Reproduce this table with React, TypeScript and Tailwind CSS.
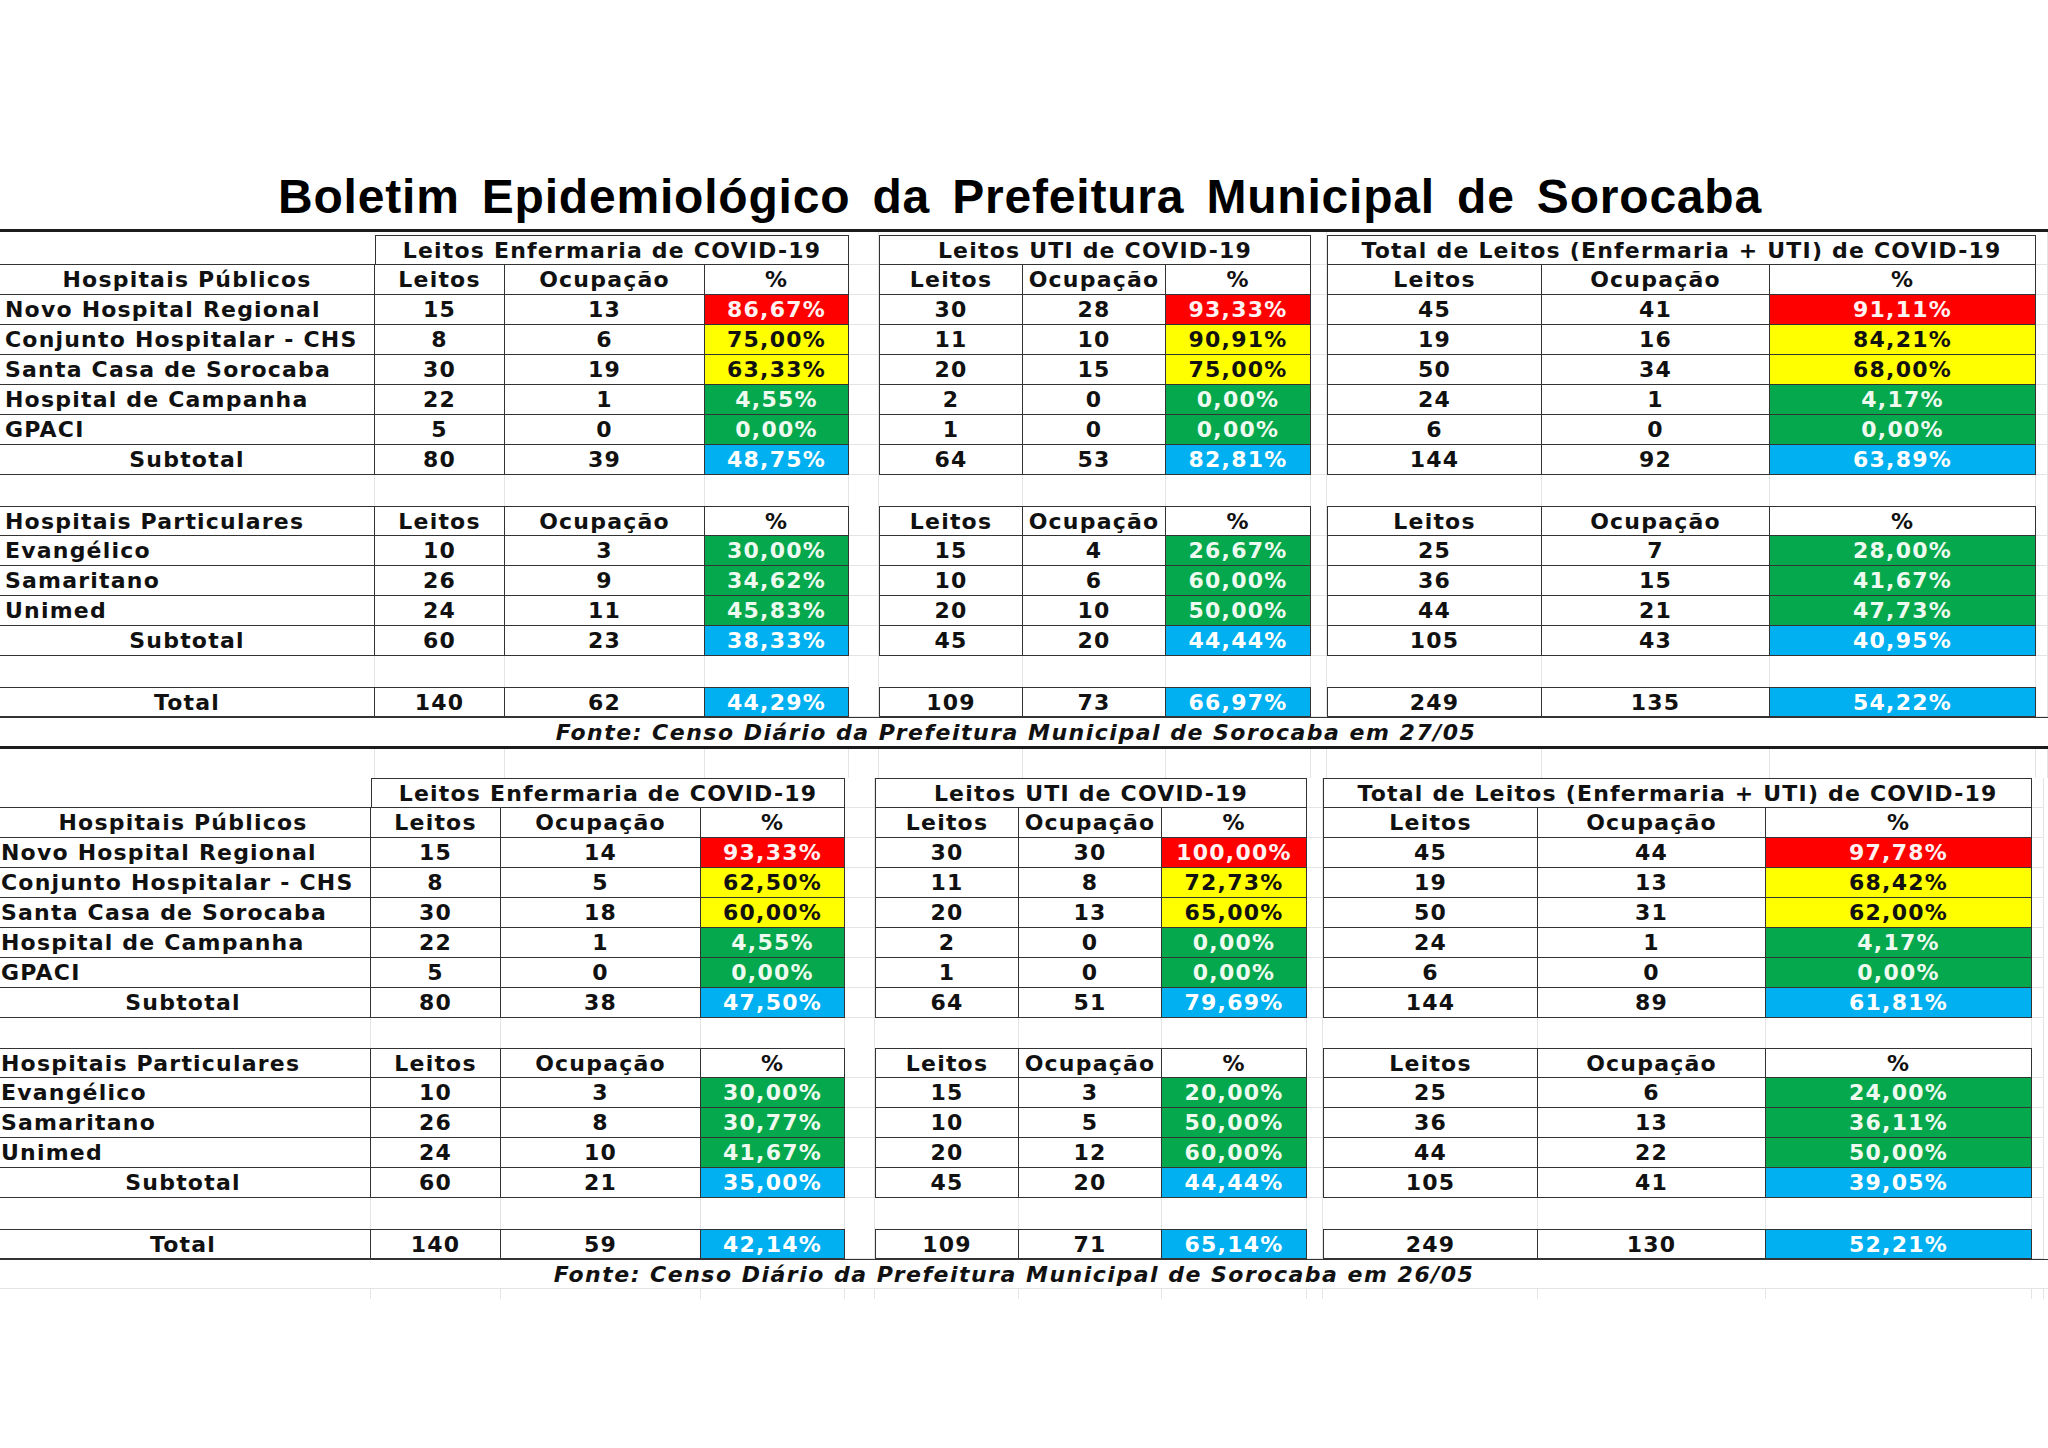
import { Fragment } from "react";
import clsx from "clsx";

type Tone = "r" | "y" | "g" | "b";
type Trip = [string, string, string, Tone];
type Line = { name: string; data: [Trip, Trip, Trip] };
type Block = {
  date: string;
  publicos: Line[];
  pubSub: Line;
  particulares: Line[];
  partSub: Line;
  total: Line;
};

const GRID =
  "grid grid-cols-[375px_130px_200px_144px_30px_144px_143px_145px_16px_215px_228px_266px_12px]";

const TONES: Record<Tone, string> = {
  r: "bg-[#ff0000] text-[#fff2f2]",
  y: "bg-[#ffff00] text-[#111]",
  g: "bg-[#05a84c] text-[#eefaf0]",
  b: "bg-[#00b0f0] text-white",
};

const BLOCKS: Block[] = [
  {
    date: "27/05",
    publicos: [
      { name: "Novo Hospital Regional", data: [["15", "13", "86,67%", "r"], ["30", "28", "93,33%", "r"], ["45", "41", "91,11%", "r"]] },
      { name: "Conjunto Hospitalar - CHS", data: [["8", "6", "75,00%", "y"], ["11", "10", "90,91%", "y"], ["19", "16", "84,21%", "y"]] },
      { name: "Santa Casa de Sorocaba", data: [["30", "19", "63,33%", "y"], ["20", "15", "75,00%", "y"], ["50", "34", "68,00%", "y"]] },
      { name: "Hospital de Campanha", data: [["22", "1", "4,55%", "g"], ["2", "0", "0,00%", "g"], ["24", "1", "4,17%", "g"]] },
      { name: "GPACI", data: [["5", "0", "0,00%", "g"], ["1", "0", "0,00%", "g"], ["6", "0", "0,00%", "g"]] },
    ],
    pubSub: { name: "Subtotal", data: [["80", "39", "48,75%", "b"], ["64", "53", "82,81%", "b"], ["144", "92", "63,89%", "b"]] },
    particulares: [
      { name: "Evangélico", data: [["10", "3", "30,00%", "g"], ["15", "4", "26,67%", "g"], ["25", "7", "28,00%", "g"]] },
      { name: "Samaritano", data: [["26", "9", "34,62%", "g"], ["10", "6", "60,00%", "g"], ["36", "15", "41,67%", "g"]] },
      { name: "Unimed", data: [["24", "11", "45,83%", "g"], ["20", "10", "50,00%", "g"], ["44", "21", "47,73%", "g"]] },
    ],
    partSub: { name: "Subtotal", data: [["60", "23", "38,33%", "b"], ["45", "20", "44,44%", "b"], ["105", "43", "40,95%", "b"]] },
    total: { name: "Total", data: [["140", "62", "44,29%", "b"], ["109", "73", "66,97%", "b"], ["249", "135", "54,22%", "b"]] },
  },
  {
    date: "26/05",
    publicos: [
      { name: "Novo Hospital Regional", data: [["15", "14", "93,33%", "r"], ["30", "30", "100,00%", "r"], ["45", "44", "97,78%", "r"]] },
      { name: "Conjunto Hospitalar - CHS", data: [["8", "5", "62,50%", "y"], ["11", "8", "72,73%", "y"], ["19", "13", "68,42%", "y"]] },
      { name: "Santa Casa de Sorocaba", data: [["30", "18", "60,00%", "y"], ["20", "13", "65,00%", "y"], ["50", "31", "62,00%", "y"]] },
      { name: "Hospital de Campanha", data: [["22", "1", "4,55%", "g"], ["2", "0", "0,00%", "g"], ["24", "1", "4,17%", "g"]] },
      { name: "GPACI", data: [["5", "0", "0,00%", "g"], ["1", "0", "0,00%", "g"], ["6", "0", "0,00%", "g"]] },
    ],
    pubSub: { name: "Subtotal", data: [["80", "38", "47,50%", "b"], ["64", "51", "79,69%", "b"], ["144", "89", "61,81%", "b"]] },
    particulares: [
      { name: "Evangélico", data: [["10", "3", "30,00%", "g"], ["15", "3", "20,00%", "g"], ["25", "6", "24,00%", "g"]] },
      { name: "Samaritano", data: [["26", "8", "30,77%", "g"], ["10", "5", "50,00%", "g"], ["36", "13", "36,11%", "g"]] },
      { name: "Unimed", data: [["24", "10", "41,67%", "g"], ["20", "12", "60,00%", "g"], ["44", "22", "50,00%", "g"]] },
    ],
    partSub: { name: "Subtotal", data: [["60", "21", "35,00%", "b"], ["45", "20", "44,44%", "b"], ["105", "41", "39,05%", "b"]] },
    total: { name: "Total", data: [["140", "59", "42,14%", "b"], ["109", "71", "65,14%", "b"], ["249", "130", "52,21%", "b"]] },
  },
];

const HEAD: [Trip, Trip, Trip] = [
  ["Leitos", "Ocupação", "%", "y"],
  ["Leitos", "Ocupação", "%", "y"],
  ["Leitos", "Ocupação", "%", "y"],
];

const cellBase = "h-[30px] flex items-center border-r border-b border-[#333] whitespace-nowrap";

function Gap({ h = "h-[30px]" }: { h?: string }) {
  return <div className={clsx(h, "border-b border-r border-[#e4e4e4]")} />;
}

function Row({ line, center, top, header }: { line: Line; center?: boolean; top?: boolean; header?: boolean }) {
  return (
    <div className={GRID}>
      <div className={clsx(cellBase, top && "border-t", center ? "justify-center" : "justify-start pl-[5px]")}>
        {line.name}
      </div>
      {line.data.map((t, i) => (
        <Fragment key={i}>
          {i > 0 && <Gap />}
          <div className={clsx(cellBase, "justify-center", top && "border-t", i > 0 && "border-l")}>{t[0]}</div>
          <div className={clsx(cellBase, "justify-center", top && "border-t")}>{t[1]}</div>
          <div className={clsx(cellBase, "justify-center", top && "border-t", !header && TONES[t[3]])}>{t[2]}</div>
        </Fragment>
      ))}
      <Gap />
    </div>
  );
}

function GroupRow({ first }: { first: boolean }) {
  const titles = [
    "Leitos Enfermaria de COVID-19",
    "Leitos UTI de COVID-19",
    "Total de Leitos (Enfermaria + UTI) de COVID-19",
  ];
  const h = first ? "h-[33px]" : "h-[30px]";
  return (
    <div className={GRID}>
      <div className={clsx(h, "border-b border-[#333]")} />
      {titles.map((t, i) => (
        <Fragment key={t}>
          {i > 0 && <Gap h={h} />}
          <div
            className={clsx(
              "col-span-3 h-[30px] flex items-center justify-center border border-[#333] whitespace-nowrap",
              first && "mt-[3px]"
            )}
          >
            {t}
          </div>
        </Fragment>
      ))}
      <Gap h={h} />
    </div>
  );
}

function BlankRow({ h = "h-[30px]" }: { h?: string }) {
  return (
    <div className={GRID}>
      {Array.from({ length: 13 }).map((_, i) => (
        <div key={i} className={clsx(h, "border-r border-[#e4e4e4]")} />
      ))}
    </div>
  );
}

function Bulletin({ block, first }: { block: Block; first: boolean }) {
  return (
    <div className={clsx(!first && "-ml-[4px]")}>
      {first && <div className="h-[3px] bg-[#1c1c1c]" />}
      <GroupRow first={first} />
      <Row line={{ name: "Hospitais Públicos", data: HEAD }} center header />
      {block.publicos.map((l) => (
        <Row key={l.name} line={l} />
      ))}
      <Row line={block.pubSub} center />
      <BlankRow h={first ? "h-[31px]" : "h-[30px]"} />
      <Row line={{ name: "Hospitais Particulares", data: HEAD }} top header />
      {block.particulares.map((l) => (
        <Row key={l.name} line={l} />
      ))}
      <Row line={block.partSub} center />
      <BlankRow h="h-[31px]" />
      <Row line={block.total} center top />
      <div
        className={clsx(
          "flex items-center justify-center pr-[16px] border-t border-[#333] italic tracking-[1.5px]",
          first ? "h-[32px] border-b-[3px] border-b-[#1c1c1c]" : "h-[30px] border-b border-b-[#e4e4e4]"
        )}
      >
        Fonte: Censo Diário da Prefeitura Municipal de Sorocaba em {block.date}
      </div>
    </div>
  );
}

export default function App() {
  return (
    <div className="w-[2048px] h-[1448px] overflow-hidden bg-white text-[#111]">
      <div className="h-[229px] pt-[167px] pr-[8px]">
        <h1 className="h-[60px] leading-[60px] text-center font-['Liberation_Sans',Arial,sans-serif] font-bold text-[48px] tracking-[0.8px] [word-spacing:8px] text-black">
          Boletim Epidemiológico da Prefeitura Municipal de Sorocaba
        </h1>
      </div>
      <div className="font-['DejaVu_Sans',sans-serif] font-bold text-[22px] tracking-[1.2px]">
        <Bulletin block={BLOCKS[0]} first />
        <BlankRow h="h-[29px]" />
        <Bulletin block={BLOCKS[1]} first={false} />
        <div className="-ml-[4px]">
          <BlankRow h="h-[10px]" />
        </div>
      </div>
    </div>
  );
}
